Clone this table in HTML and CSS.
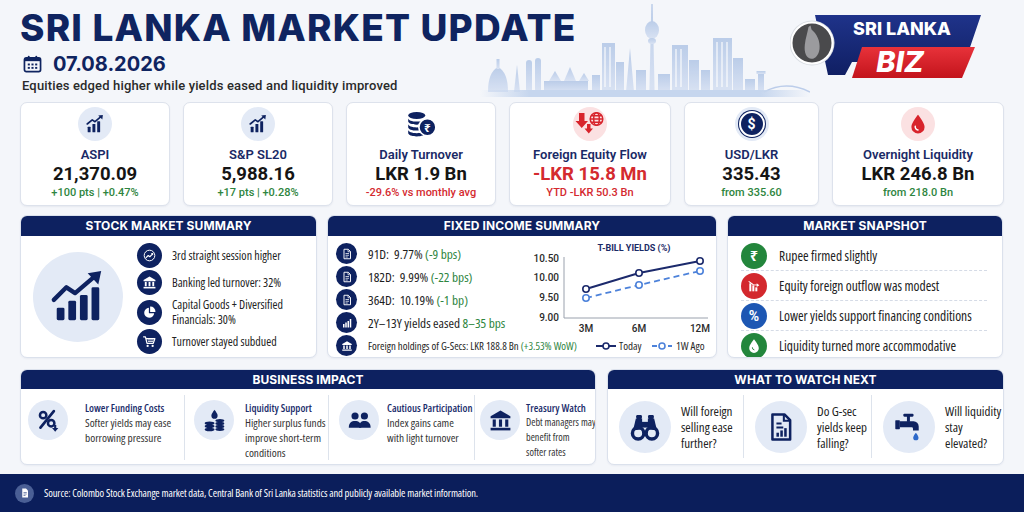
FILE: index.html
```html
<!DOCTYPE html>
<html lang="en">
<head>
<meta charset="utf-8">
<title>Sri Lanka Market Update</title>
<link rel="stylesheet" href="styles.css">
</head>
<body>
<svg class="sprite" aria-hidden="true">
  <defs>
    <symbol id="s-growth" viewBox="0 0 24 24">
      <rect x="4" y="15" width="3.2" height="6" rx=".6"/>
      <rect x="9.2" y="12" width="3.2" height="9" rx=".6"/>
      <rect x="14.4" y="9" width="3.2" height="12" rx=".6"/>
      <path d="M3.5 12 L9 7.5 L12 9.5 L18.5 4" fill="none" stroke="currentColor" stroke-width="1.8" stroke-linecap="round" stroke-linejoin="round"/>
      <path d="M15.5 2.6 L20.6 2.2 L20 7.2 Z"/>
    </symbol>
    <symbol id="s-bigchart" viewBox="0 0 60 60">
      <rect x="8" y="41" width="8" height="13" rx="1.5"/>
      <rect x="20" y="34" width="8" height="20" rx="1.5"/>
      <rect x="32" y="28" width="8" height="26" rx="1.5"/>
      <rect x="44" y="20" width="8" height="34" rx="1.5"/>
      <path d="M5 33 L18 20 L27 26 L47 9" fill="none" stroke="currentColor" stroke-width="4.5" stroke-linecap="round" stroke-linejoin="round"/>
      <path d="M40 5.5 L54 3 L51 17 Z"/>
    </symbol>
    <symbol id="s-trend" viewBox="0 0 24 24">
      <circle cx="12" cy="12" r="8.5" fill="none" stroke="currentColor" stroke-width="1.6"/>
      <path d="M6.5 15.5 L10 12 L12.5 14 L17 9.5" fill="none" stroke="currentColor" stroke-width="1.8" stroke-linecap="round" stroke-linejoin="round"/>
      <path d="M14 8.5 L18 8 L17.6 12 Z"/>
    </symbol>
    <symbol id="s-bank" viewBox="0 0 24 24">
      <path d="M12 2.5 L2.5 8 V9.8 H21.5 V8 Z"/>
      <rect x="4.5" y="11" width="3" height="7"/>
      <rect x="10.5" y="11" width="3" height="7"/>
      <rect x="16.5" y="11" width="3" height="7"/>
      <rect x="2.5" y="19" width="19" height="2.5"/>
    </symbol>
    <symbol id="s-pie" viewBox="0 0 24 24">
      <path d="M11 4.5 A8 8 0 1 0 19.5 13 H11 Z"/>
      <path d="M13 2.5 A8 8 0 0 1 21.5 11 H13 Z"/>
    </symbol>
    <symbol id="s-cart" viewBox="0 0 24 24">
      <path d="M2.5 4.5 H5.5 L8 15 H18 L20.5 7.5 H6.5" fill="none" stroke="currentColor" stroke-width="2" stroke-linejoin="round" stroke-linecap="round"/>
      <path d="M9 9.5 H18.5 M9.5 12 H17.8" stroke="currentColor" stroke-width="1.3"/>
      <circle cx="9" cy="19" r="1.8"/>
      <circle cx="17" cy="19" r="1.8"/>
    </symbol>
    <symbol id="s-doc" viewBox="0 0 24 24">
      <path d="M6 2.5 H14.5 L19 7 V21.5 H6 Z" fill="none" stroke="currentColor" stroke-width="1.9" stroke-linejoin="round"/>
      <path d="M14 3 V7.5 H18.5" fill="none" stroke="currentColor" stroke-width="1.5"/>
      <path d="M9 11 H16 M9 14.5 H16 M9 18 H13.5" stroke="currentColor" stroke-width="1.5"/>
    </symbol>
    <symbol id="s-bars" viewBox="0 0 24 24">
      <rect x="4" y="14" width="3" height="7"/>
      <rect x="8.5" y="11" width="3" height="10"/>
      <rect x="13" y="8" width="3" height="13"/>
      <rect x="17.5" y="4" width="3" height="17"/>
    </symbol>
    <symbol id="s-coins" viewBox="0 0 30 26">
      <ellipse cx="11" cy="5" rx="8" ry="3.2"/>
      <path d="M3 7.5 V10.5 C3 12.3 6.6 13.7 11 13.7 S19 12.3 19 10.5 V7.5 C19 9.3 15.4 10.7 11 10.7 S3 9.3 3 7.5 Z"/>
      <path d="M3 13 V16 C3 17.8 6.6 19.2 11 19.2 S19 17.8 19 16 V13 C19 14.8 15.4 16.2 11 16.2 S3 14.8 3 13 Z"/>
      <path d="M3 18.5 V21.5 C3 23.3 6.6 24.7 11 24.7 S19 23.3 19 21.5 V18.5 C19 20.3 15.4 21.7 11 21.7 S3 20.3 3 18.5 Z"/>
      <circle cx="21" cy="16" r="8" stroke="#fff" stroke-width="1.6"/>
      <text x="21" y="20.2" text-anchor="middle" font-size="11" font-weight="700" fill="#fff" font-family="Noto Sans, DejaVu Sans, sans-serif">₹</text>
    </symbol>
    <symbol id="s-flow" viewBox="0 0 30 26">
      <path d="M4 2 H9.5 V10 H13 L6.75 17 L0.5 10 H4 Z"/>
      <path d="M12 13 H15.5 V17.5 H18 L13.75 22.5 L9.5 17.5 H12 Z"/>
      <g fill="none" stroke="currentColor" stroke-width="1.5">
        <circle cx="21.5" cy="8" r="6.3"/>
        <ellipse cx="21.5" cy="8" rx="2.8" ry="6.3"/>
        <path d="M15.2 8 H27.8 M16.2 4.8 H26.8 M16.2 11.2 H26.8"/>
      </g>
    </symbol>
    <symbol id="s-drop" viewBox="0 0 24 24">
      <path d="M12 2 C12 2 4.8 10.5 4.8 15.2 A7.2 7.2 0 0 0 19.2 15.2 C19.2 10.5 12 2 12 2 Z"/>
    </symbol>
    <symbol id="s-pctdown" viewBox="0 0 28 28">
      <circle cx="8" cy="8" r="3.6" fill="none" stroke="currentColor" stroke-width="2.8"/>
      <circle cx="17" cy="17" r="3.6" fill="none" stroke="currentColor" stroke-width="2.8"/>
      <path d="M20 3.5 L5 22" stroke="currentColor" stroke-width="3" stroke-linecap="round"/>
      <path d="M21.5 19 V24" stroke="currentColor" stroke-width="2.4"/>
      <path d="M18 22.5 L21.5 26.5 L25 22.5 Z"/>
    </symbol>
    <symbol id="s-dropcoins" viewBox="0 0 28 28">
      <path d="M14 2 C14 2 10.5 6.3 10.5 8.6 A3.5 3.5 0 0 0 17.5 8.6 C17.5 6.3 14 2 14 2 Z"/>
      <ellipse cx="8.5" cy="17" rx="5.5" ry="2"/>
      <ellipse cx="8.5" cy="20.5" rx="5.5" ry="2"/>
      <ellipse cx="8.5" cy="24" rx="5.5" ry="2"/>
      <ellipse cx="20" cy="14" rx="5" ry="1.8"/>
      <ellipse cx="20" cy="17.3" rx="5" ry="1.8"/>
      <ellipse cx="20" cy="20.6" rx="5" ry="1.8"/>
      <ellipse cx="20" cy="23.9" rx="5" ry="1.8"/>
    </symbol>
    <symbol id="s-people" viewBox="0 0 28 28">
      <circle cx="9" cy="9" r="4"/>
      <circle cx="19.5" cy="9" r="4"/>
      <path d="M2 22 C2 16.5 5 14.5 9 14.5 S16 16.5 16 22 Z"/>
      <path d="M13.5 22 C13.5 16.5 16 14.5 19.5 14.5 S26.5 16.5 26.5 22 Z"/>
    </symbol>
    <symbol id="s-binoc" viewBox="0 0 28 28">
      <path d="M3.5 17 L6 6.5 H11.5 V16 Z"/>
      <path d="M24.5 17 L22 6.5 H16.5 V16 Z"/>
      <rect x="6.3" y="3.5" width="5" height="3.5" rx="1"/>
      <rect x="16.7" y="3.5" width="5" height="3.5" rx="1"/>
      <rect x="11" y="9.5" width="6" height="5"/>
      <circle cx="8" cy="19.5" r="5" fill="none" stroke="currentColor" stroke-width="3"/>
      <circle cx="20" cy="19.5" r="5" fill="none" stroke="currentColor" stroke-width="3"/>
    </symbol>
    <symbol id="s-report" viewBox="0 0 28 28">
      <path d="M6.5 3 H17 L22 8 V25 H6.5 Z" fill="none" stroke="currentColor" stroke-width="2.2" stroke-linejoin="round"/>
      <path d="M16.5 3.5 V8.5 H21.5" fill="none" stroke="currentColor" stroke-width="1.8"/>
      <path d="M10 11 H14.5 M10 14.5 H16" stroke="currentColor" stroke-width="1.8"/>
      <rect x="10" y="19" width="2.2" height="3.5"/>
      <rect x="13.4" y="17" width="2.2" height="5.5"/>
      <rect x="16.8" y="15" width="2.2" height="7.5"/>
    </symbol>
    <symbol id="s-tap" viewBox="0 0 28 28">
      <rect x="2" y="8" width="4" height="8" rx=".6"/>
      <path d="M6 9 H18 A4.5 4.5 0 0 1 22.5 13.5 V17 H17.5 V15.5 A1.2 1.2 0 0 0 16.3 14.3 H6 Z"/>
      <rect x="12.2" y="4" width="2.6" height="5.5"/>
      <rect x="9" y="2.5" width="9" height="2.5" rx="1"/>
      <path d="M20 19 C20 19 17.7 21.8 17.7 23.3 A2.3 2.3 0 0 0 22.3 23.3 C22.3 21.8 20 19 20 19 Z" fill="#2c68c9"/>
    </symbol>
  </defs>
</svg>

<div class="page">
  <header class="header">
    <svg class="skyline" viewBox="0 0 330 98" aria-hidden="true">
      <defs>
        <linearGradient id="skyg" x1="0" y1="0" x2="0" y2="1">
          <stop offset="0" stop-color="#adc3e5"/>
          <stop offset="1" stop-color="#d3def2"/>
        </linearGradient>
        <linearGradient id="groundg" x1="0" y1="0" x2="1" y2="0">
          <stop offset="0" stop-color="#c6d6ee" stop-opacity="0"/>
          <stop offset=".15" stop-color="#c6d6ee"/>
          <stop offset=".85" stop-color="#c6d6ee"/>
          <stop offset="1" stop-color="#c6d6ee" stop-opacity="0"/>
        </linearGradient>
      </defs>
      <g fill="url(#skyg)" opacity=".8">
        <path d="M8 92 Q8 72 18 67 Q28 72 28 92 Z"/>
        <rect x="16.5" y="59" width="3" height="10"/>
        <polygon points="34,92 37,65 40,92"/>
        <rect x="46" y="60" width="6" height="32" rx="3"/>
        <rect x="55" y="58" width="6" height="34" rx="3"/>
        <rect x="64" y="81" width="44" height="11"/>
        <polygon points="69,81 75,71 81,81"/>
        <polygon points="84,81 90,67 96,81"/>
        <polygon points="99,81 104,73 109,81"/>
        <rect x="112" y="75" width="8" height="17"/>
        <rect x="122" y="43" width="13" height="49"/>
        <rect x="136" y="62" width="8" height="30"/>
        <polygon points="146,92 150,48 154,92"/>
        <rect x="156" y="70" width="10" height="22"/>
        <polygon points="171.3,4 172.7,4 174.6,92 169.4,92"/>
        <ellipse cx="172" cy="30" rx="7" ry="9"/>
        <ellipse cx="172" cy="41" rx="4" ry="3"/>
        <rect x="178" y="74" width="12" height="18"/>
        <rect x="192" y="45" width="16" height="47"/>
        <rect x="209" y="60" width="10" height="32"/>
        <rect x="221" y="70" width="9" height="22"/>
        <rect x="233" y="38" width="19" height="54"/>
        <rect x="253" y="58" width="10" height="34"/>
        <rect x="265" y="79" width="10" height="13"/>
        <rect x="278" y="74" width="6" height="18"/>
        <rect x="276.5" y="71" width="9" height="3"/>
      </g>
      <g fill="#ffffff" opacity=".55">
        <rect x="124" y="47" width="2" height="40"/><rect x="129" y="47" width="2" height="40"/>
        <rect x="195" y="49" width="2" height="38"/><rect x="200" y="49" width="2" height="38"/>
        <rect x="236" y="42" width="2" height="45"/><rect x="241" y="42" width="2" height="45"/><rect x="246" y="42" width="2" height="45"/>
      </g>
      <path d="M284 92 Q306 80 330 92" fill="none" stroke="#bccdea" stroke-width="1.5"/>
      <rect x="0" y="90" width="330" height="7" fill="url(#groundg)"/>
    </svg>

    <div class="head-left">
      <h1 class="title">SRI LANKA MARKET UPDATE</h1>
      <div class="date-row">
        <svg class="cal" viewBox="0 0 20 19" aria-hidden="true">
          <rect x="1.5" y="3" width="17" height="14.5" rx="2" fill="none" stroke="currentColor" stroke-width="1.8"/>
          <rect x="1.5" y="3" width="17" height="3.5" fill="currentColor"/>
          <rect x="5" y="0.8" width="2" height="4" rx="1" fill="currentColor"/>
          <rect x="13" y="0.8" width="2" height="4" rx="1" fill="currentColor"/>
          <g fill="currentColor">
            <rect x="5" y="9" width="2.2" height="2"/><rect x="8.9" y="9" width="2.2" height="2"/><rect x="12.8" y="9" width="2.2" height="2"/>
            <rect x="5" y="12.6" width="2.2" height="2"/><rect x="8.9" y="12.6" width="2.2" height="2"/><rect x="12.8" y="12.6" width="2.2" height="2"/>
          </g>
        </svg>
        <span class="date">07.08.2026</span>
      </div>
      <p class="subtitle">Equities edged higher while yields eased and liquidity improved</p>
    </div>

    <svg class="logo" viewBox="0 0 212 70" aria-label="Sri Lanka Biz">
      <defs>
        <linearGradient id="redg" x1="0" y1="0" x2="0" y2="1">
          <stop offset="0" stop-color="#e8323a"/>
          <stop offset="1" stop-color="#c3141c"/>
        </linearGradient>
        <linearGradient id="navyg" x1="0" y1="0" x2="0" y2="1">
          <stop offset="0" stop-color="#1f338a"/>
          <stop offset="1" stop-color="#101f63"/>
        </linearGradient>
      </defs>
      <polygon points="25,3 191,3 175,50 62,50 55,63 38,63" fill="url(#navyg)"/>
      <polygon points="72,35 185,35 172,66 62,66" fill="url(#redg)"/>
      <text x="112" y="22.5" text-anchor="middle" class="logo-top">SRI LANKA</text>
      <text x="110" y="60" text-anchor="middle" class="logo-biz">BIZ</text>
      <circle cx="22" cy="31" r="22.5" fill="#d9dde3"/>
      <circle cx="22" cy="31" r="20.5" fill="#4a4a4c" stroke="#fff" stroke-width="2"/>
      <path d="M18.5 15 L20.5 13.5 L21.5 17.5 C26.5 21.5 30.5 29 29.5 37 C28.8 43 25 47.5 21 46.8 C16 46 14 40 14.8 33 C15.5 26 17.5 21 18.5 15 Z" fill="#9b9b9e"/>
    </svg>
  </header>

  <section class="kpis">
    <div class="kpi">
      <span class="kpi-icon"><svg class="navy" viewBox="0 0 24 24" fill="currentColor"><use href="#s-growth"/></svg></span>
      <span class="kpi-label">ASPI</span>
      <span class="kpi-value">21,370.09</span>
      <span class="kpi-sub up">+100 pts | +0.47%</span>
    </div>
    <div class="kpi">
      <span class="kpi-icon"><svg class="navy" viewBox="0 0 24 24" fill="currentColor"><use href="#s-growth"/></svg></span>
      <span class="kpi-label">S&amp;P SL20</span>
      <span class="kpi-value">5,988.16</span>
      <span class="kpi-sub up">+17 pts | +0.28%</span>
    </div>
    <div class="kpi">
      <span class="kpi-icon plain"><svg class="navy coins" viewBox="0 0 30 26" fill="currentColor"><use href="#s-coins"/></svg></span>
      <span class="kpi-label">Daily Turnover</span>
      <span class="kpi-value">LKR 1.9 Bn</span>
      <span class="kpi-sub down">-29.6% vs monthly avg</span>
    </div>
    <div class="kpi">
      <span class="kpi-icon pink"><svg class="red flow" viewBox="0 0 30 26" fill="currentColor"><use href="#s-flow"/></svg></span>
      <span class="kpi-label">Foreign Equity Flow</span>
      <span class="kpi-value down">-LKR 15.8 Mn</span>
      <span class="kpi-sub down">YTD -LKR 50.3 Bn</span>
    </div>
    <div class="kpi">
      <span class="kpi-icon"><span class="usd">$</span></span>
      <span class="kpi-label">USD/LKR</span>
      <span class="kpi-value">335.43</span>
      <span class="kpi-sub up">from 335.60</span>
    </div>
    <div class="kpi">
      <span class="kpi-icon pink"><svg class="red" viewBox="0 0 24 24" fill="currentColor"><use href="#s-drop"/><path d="M9 14.5 A3.5 3.5 0 0 0 12 18.5" fill="none" stroke="#fff" stroke-width="1.6" stroke-linecap="round"/></svg></span>
      <span class="kpi-label">Overnight Liquidity</span>
      <span class="kpi-value">LKR 246.8 Bn</span>
      <span class="kpi-sub up">from 218.0 Bn</span>
    </div>
  </section>

  <section class="row2">
    <div class="panel">
      <div class="panel-head">STOCK MARKET SUMMARY</div>
      <div class="ss-body">
        <div class="ss-big"><svg viewBox="0 0 60 60" fill="currentColor"><use href="#s-bigchart"/></svg></div>
        <ul class="ss-list">
          <li><span class="ic"><svg viewBox="0 0 24 24" fill="currentColor"><use href="#s-trend"/></svg></span>3rd straight session higher</li>
          <li><span class="ic"><svg viewBox="0 0 24 24" fill="currentColor"><use href="#s-bank"/></svg></span>Banking led turnover: 32%</li>
          <li><span class="ic"><svg viewBox="0 0 24 24" fill="currentColor"><use href="#s-pie"/></svg></span><span>Capital Goods + Diversified<br>Financials: 30%</span></li>
          <li><span class="ic"><svg viewBox="0 0 24 24" fill="currentColor"><use href="#s-cart"/></svg></span>Turnover stayed subdued</li>
        </ul>
      </div>
    </div>

    <div class="panel">
      <div class="panel-head">FIXED INCOME SUMMARY</div>
      <div class="fi-body">
        <ul class="fi-list">
          <li><span class="ic sm"><svg viewBox="0 0 24 24" fill="currentColor"><use href="#s-doc"/></svg></span><span>91D:&nbsp; 9.77% <span class="g">(-9 bps)</span></span></li>
          <li><span class="ic sm"><svg viewBox="0 0 24 24" fill="currentColor"><use href="#s-doc"/></svg></span><span>182D:&nbsp; 9.99% <span class="g">(-22 bps)</span></span></li>
          <li><span class="ic sm"><svg viewBox="0 0 24 24" fill="currentColor"><use href="#s-doc"/></svg></span><span>364D:&nbsp; 10.19% <span class="g">(-1 bp)</span></span></li>
          <li><span class="ic sm"><svg viewBox="0 0 24 24" fill="currentColor"><use href="#s-bars"/></svg></span><span>2Y–13Y yields eased <span class="g">8–35 bps</span></span></li>
          <li class="small"><span class="ic sm"><svg viewBox="0 0 24 24" fill="currentColor"><use href="#s-bank"/></svg></span><span>Foreign holdings of G-Secs: LKR 188.8 Bn <span class="g">(+3.53% WoW)</span></span></li>
        </ul>
        <svg class="chart" viewBox="0 0 188 121">
          <text x="102" y="15" text-anchor="middle" class="c-title">T-BILL YIELDS (%)</text>
          <g class="c-ylab" text-anchor="end">
            <text x="27" y="26">10.50</text>
            <text x="27" y="45">10.00</text>
            <text x="27" y="65">9.50</text>
            <text x="27" y="85">9.00</text>
          </g>
          <path d="M32 21 V82 H176" fill="none" stroke="#9aa1ad" stroke-width="1"/>
          <polyline points="54,62 107,49 168,35" fill="none" stroke="#4d82da" stroke-width="1.8" stroke-dasharray="6 4"/>
          <polyline points="54,53 107,37 168,25" fill="none" stroke="#1c2a6c" stroke-width="2"/>
          <g fill="#fff" stroke-width="1.6">
            <circle cx="54" cy="62" r="3.2" stroke="#4d82da"/>
            <circle cx="107" cy="49" r="3.2" stroke="#4d82da"/>
            <circle cx="168" cy="35" r="3.2" stroke="#4d82da"/>
            <circle cx="54" cy="53" r="3.2" stroke="#1c2a6c"/>
            <circle cx="107" cy="37" r="3.2" stroke="#1c2a6c"/>
            <circle cx="168" cy="25" r="3.2" stroke="#1c2a6c"/>
          </g>
          <g class="c-xlab" text-anchor="middle">
            <text x="54" y="96">3M</text>
            <text x="107" y="96">6M</text>
            <text x="168" y="96">12M</text>
          </g>
          <path d="M64 110 H84" stroke="#1c2a6c" stroke-width="2"/>
          <circle cx="74" cy="110" r="3" fill="#fff" stroke="#1c2a6c" stroke-width="1.6"/>
          <text x="87" y="114" class="c-leg">Today</text>
          <path d="M120 110 H140" stroke="#4d82da" stroke-width="1.8" stroke-dasharray="5 3"/>
          <circle cx="130" cy="110" r="3" fill="#fff" stroke="#4d82da" stroke-width="1.6"/>
          <text x="144" y="114" class="c-leg">1W Ago</text>
        </svg>
      </div>
    </div>

    <div class="panel">
      <div class="panel-head">MARKET SNAPSHOT</div>
      <ul class="ms-list">
        <li><span class="ms-ic green"><span class="rs">₹</span></span>Rupee firmed slightly</li>
        <li><span class="ms-ic redc"><svg viewBox="0 0 24 24"><g fill="#fff"><rect x="5" y="8" width="3" height="12"/><rect x="9.5" y="11" width="3" height="9"/><rect x="14" y="14" width="3" height="6"/></g><path d="M4 5 L11 10 L17 10.5" fill="none" stroke="#fff" stroke-width="1.6"/><path d="M16 8 L20 11 L16 13.5 Z" fill="#fff"/></svg></span>Equity foreign outflow was modest</li>
        <li><span class="ms-ic blue"><span class="pc">%</span></span>Lower yields support financing conditions</li>
        <li><span class="ms-ic green"><svg viewBox="0 0 24 24" fill="#fff"><use href="#s-drop"/><path d="M9.5 14.5 A3 3 0 0 0 12 17.8" fill="none" stroke="#23863c" stroke-width="1.4" stroke-linecap="round"/></svg></span>Liquidity turned more accommodative</li>
      </ul>
    </div>
  </section>

  <section class="row3">
    <div class="panel">
      <div class="panel-head h19">BUSINESS IMPACT</div>
      <div class="bi-body">
        <div class="bi-item">
          <span class="circ bi-c"><svg viewBox="0 0 28 28" fill="currentColor"><use href="#s-pctdown"/></svg></span>
          <div class="bi-text"><div class="bi-title">Lower Funding Costs</div><div class="bi-desc">Softer yields may ease<br>borrowing pressure</div></div>
        </div>
        <div class="bi-item">
          <span class="circ bi-c"><svg viewBox="0 0 28 28" fill="currentColor"><use href="#s-dropcoins"/></svg></span>
          <div class="bi-text"><div class="bi-title">Liquidity Support</div><div class="bi-desc">Higher surplus funds<br>improve short-term<br>conditions</div></div>
        </div>
        <div class="bi-item">
          <span class="circ bi-c"><svg viewBox="0 0 28 28" fill="currentColor"><use href="#s-people"/></svg></span>
          <div class="bi-text"><div class="bi-title">Cautious Participation</div><div class="bi-desc">Index gains came<br>with light turnover</div></div>
        </div>
        <div class="bi-item">
          <span class="circ bi-c"><svg viewBox="0 0 24 24" fill="currentColor"><use href="#s-bank"/></svg></span>
          <div class="bi-text"><div class="bi-title">Treasury Watch</div><div class="bi-desc sm">Debt managers may<br>benefit from<br>softer rates</div></div>
        </div>
      </div>
    </div>

    <div class="panel">
      <div class="panel-head h19">WHAT TO WATCH NEXT</div>
      <div class="ww-body">
        <div class="ww-item">
          <span class="circ ww-c"><svg viewBox="0 0 28 28" fill="currentColor"><use href="#s-binoc"/></svg></span>
          <div class="ww-text">Will foreign<br>selling ease<br>further?</div>
        </div>
        <div class="ww-item">
          <span class="circ ww-c"><svg viewBox="0 0 28 28" fill="currentColor"><use href="#s-report"/></svg></span>
          <div class="ww-text">Do G-sec<br>yields keep<br>falling?</div>
        </div>
        <div class="ww-item">
          <span class="circ ww-c"><svg viewBox="0 0 28 28" fill="currentColor"><use href="#s-tap"/></svg></span>
          <div class="ww-text">Will liquidity<br>stay<br>elevated?</div>
        </div>
      </div>
    </div>
  </section>
</div>

<footer class="footer">
  <span class="f-ic"><svg viewBox="0 0 24 24" fill="#fff"><path d="M6.5 3 H14 L18 7 V21 H6.5 Z"/><path d="M9 11 H15.5 M9 14 H15.5 M9 17 H13" stroke="#4a5f95" stroke-width="1.4"/></svg></span>
  <span class="f-text">Source: Colombo Stock Exchange market data, Central Bank of Sri Lanka statistics and publicly available market information.</span>
</footer>
</body>
</html>
```

FILE: styles.css
```css
* { box-sizing: border-box; }

html, body {
  margin: 0;
  padding: 0;
}

body {
  width: 1024px;
  height: 512px;
  overflow: hidden;
  background: #f4f6fa;
  font-family: Inter, Roboto, "Liberation Sans", sans-serif;
  color: #1b1b1b;
}

.sprite {
  position: absolute;
  width: 0;
  height: 0;
  overflow: hidden;
}

.page {
  padding: 0 20px;
}

/* ---------- header ---------- */
.header {
  position: relative;
  height: 98px;
  display: flex;
  justify-content: space-between;
  align-items: flex-start;
}

.skyline {
  position: absolute;
  left: 460px;
  top: 0;
  width: 330px;
  height: 98px;
}

.head-left {
  position: relative;
  padding-top: 10px;
}

.title {
  margin: 0;
  font: 800 37px/36px Inter, sans-serif;
  letter-spacing: 1.2px;
  color: #0f2460;
}

.date-row {
  display: flex;
  align-items: center;
  gap: 11px;
  margin: 7px 0 0 3px;
  height: 22px;
}

.cal {
  width: 19px;
  height: 18px;
  color: #0f2460;
}

.date {
  font: 700 20px/22px Inter, sans-serif;
  color: #0f2460;
}

.subtitle {
  margin: 3px 0 0 2px;
  font: 500 13px/16px Roboto, sans-serif;
  letter-spacing: 0.15px;
  color: #2a2a2a;
}

.logo {
  position: relative;
  width: 212px;
  height: 70px;
  margin-top: 12px;
  margin-right: 2px;
}

.logo-top {
  font: 800 18px Inter, sans-serif;
  fill: #fff;
}

.logo-biz {
  font: italic 800 29px Inter, sans-serif;
  fill: #fff;
}

/* ---------- KPI cards ---------- */
.kpis {
  display: grid;
  grid-template-columns: 150px 150px 150px 162px 135px 172px;
  column-gap: 13px;
  margin-top: 4px;
}

.kpi {
  height: 104px;
  background: #fff;
  border: 1px solid #dde2ec;
  border-radius: 7px;
  box-shadow: 0 1px 2px rgba(20, 40, 90, 0.06);
  display: flex;
  flex-direction: column;
  align-items: center;
  padding-top: 4px;
}

.kpi-icon {
  width: 34px;
  height: 34px;
  border-radius: 50%;
  background: #e3eaf6;
  display: flex;
  align-items: center;
  justify-content: center;
}

.kpi-icon svg { width: 22px; height: 22px; }
.kpi-icon.plain { background: transparent; }
.kpi-icon.pink { background: #fbe1e2; }
.kpi-icon .coins { width: 32px; height: 28px; }
.kpi-icon .flow { width: 30px; height: 26px; }

.navy { color: #0e2260; }
.red { color: #d8242c; }

.usd {
  width: 26px;
  height: 26px;
  border-radius: 50%;
  background: #0e2260;
  border: 2px solid #fff;
  box-shadow: 0 0 0 1px #0e2260;
  color: #fff;
  font: 700 14px/22px Roboto, sans-serif;
  text-align: center;
}

.kpi-label {
  margin-top: 6px;
  font: 600 13px/16px Roboto, sans-serif;
  color: #1a2a66;
}

.kpi-value {
  font: 700 18.5px/22px Roboto, sans-serif;
  color: #151515;
}

.kpi-sub {
  margin-top: 1px;
  font: 500 11px/14px Roboto, sans-serif;
}

.up { color: #2e8540; }
.down { color: #d42a2f; }
.kpi-value.down { color: #d42a2f; }

/* ---------- panels ---------- */
.row2 {
  display: grid;
  grid-template-columns: 297px 390px 276px;
  column-gap: 10px;
  margin-top: 9px;
  height: 143px;
}

.row3 {
  display: grid;
  grid-template-columns: 576px 397px;
  column-gap: 11px;
  margin-top: 11px;
  height: 96px;
}

.panel {
  background: #fff;
  border: 1px solid #dbe1ec;
  border-radius: 7px;
  overflow: hidden;
  display: flex;
  flex-direction: column;
  box-shadow: 0 1px 2px rgba(20, 40, 90, 0.05);
}

.panel-head {
  flex: none;
  height: 20px;
  background: #0d2160;
  color: #fff;
  font: 700 12px/20px Inter, sans-serif;
  letter-spacing: 0.1px;
  text-align: center;
}

.panel-head.h19 {
  height: 19px;
  line-height: 19px;
}

/* condensed text */
.ss-list li,
.fi-list li,
.ms-list li,
.bi-text,
.ww-text,
.f-text,
.c-leg {
  font-family: "Open Sans", Roboto, sans-serif;
  font-stretch: 75%;
}

.ic {
  flex: none;
  width: 25px;
  height: 25px;
  border-radius: 50%;
  background: #0e2260;
  color: #fff;
  display: flex;
  align-items: center;
  justify-content: center;
}

.ic svg { width: 15px; height: 15px; }
.ic.sm { width: 21px; height: 21px; }
.ic.sm svg { width: 12px; height: 12px; }

/* stock summary */
.ss-body {
  flex: 1;
  display: flex;
  align-items: flex-start;
}

.ss-big {
  flex: none;
  width: 90px;
  height: 90px;
  border-radius: 50%;
  background: #e3eaf6;
  margin: 16px 0 0 12px;
  display: flex;
  align-items: center;
  justify-content: center;
  color: #0e2260;
}

.ss-big svg { width: 58px; height: 58px; }

.ss-list {
  list-style: none;
  margin: 7px 0 0 14px;
  padding: 0;
  display: flex;
  flex-direction: column;
  gap: 2px;
}

.ss-list li {
  display: flex;
  align-items: center;
  gap: 10px;
  min-height: 25px;
  font-size: 12px;
  line-height: 15px;
  color: #222;
  white-space: nowrap;
}

/* fixed income */
.fi-body {
  flex: 1;
  display: flex;
}

.fi-list {
  flex: none;
  width: 196px;
  list-style: none;
  margin: 6px 0 0 8px;
  padding: 0;
}

.fi-list li {
  height: 23px;
  display: flex;
  align-items: center;
  gap: 11px;
  font-size: 13.3px;
  color: #1d1d1d;
  white-space: nowrap;
}

.fi-list li.small { font-size: 10.8px; }

.g { color: #2e8540; }

.chart {
  flex: none;
  margin-left: auto;
  width: 188px;
  height: 121px;
}

.c-title {
  font: 700 9px Roboto, sans-serif;
  fill: #1a2a66;
}

.c-ylab text,
.c-xlab text {
  font: 500 10px Roboto, sans-serif;
  fill: #2a2a2a;
}

.c-leg {
  font-size: 11px;
  fill: #2a2a2a;
}

/* market snapshot */
.ms-list {
  list-style: none;
  margin: 5px 15px 0 13px;
  padding: 0;
}

.ms-list li {
  height: 30px;
  display: flex;
  align-items: center;
  gap: 12px;
  border-bottom: 1px dashed #d5dbe6;
  font-size: 13.5px;
  color: #222;
  white-space: nowrap;
}

.ms-list li:last-child { border-bottom: none; }

.ms-ic {
  flex: none;
  width: 26px;
  height: 26px;
  border-radius: 50%;
  display: flex;
  align-items: center;
  justify-content: center;
  color: #fff;
}

.ms-ic svg { width: 16px; height: 16px; }
.ms-ic.green { background: #23863c; }
.ms-ic.redc { background: #d3282d; }
.ms-ic.blue { background: #1d57b3; }

.rs {
  font: 700 14px/1 "Noto Sans", "DejaVu Sans", sans-serif;
}

.pc {
  font: 700 14px/1 Roboto, sans-serif;
}

/* business impact */
.circ {
  flex: none;
  border-radius: 50%;
  background: #e3eaf6;
  display: flex;
  align-items: center;
  justify-content: center;
  color: #0e2260;
}

.bi-body {
  flex: 1;
  display: grid;
  grid-template-columns: 163px 144px 146px 1fr;
  padding: 6px 0;
}

.bi-item {
  display: flex;
  align-items: flex-start;
  padding-left: 9px;
  gap: 11px;
}

.bi-item + .bi-item { border-left: 1px solid #dde3ec; }
.bi-item:nth-child(1) { padding-left: 7px; gap: 17px; }
.bi-item:nth-child(3) { padding-left: 10px; gap: 8px; }
.bi-item:nth-child(4) { padding-left: 5px; gap: 6px; }

.bi-c {
  width: 40px;
  height: 40px;
  margin-top: 5px;
}

.bi-c svg { width: 25px; height: 25px; }

.bi-text {
  padding-top: 6px;
  white-space: nowrap;
}

.bi-title {
  font-size: 10.6px;
  line-height: 14px;
  font-weight: 600;
  color: #1b2d6b;
}

.bi-desc {
  font-size: 11.3px;
  line-height: 15px;
  color: #333;
}

.bi-desc.sm {
  font-size: 10.2px;
}

/* what to watch */
.ww-body {
  flex: 1;
  display: grid;
  grid-template-columns: 135px 128px 1fr;
  padding: 6px 0;
}

.ww-item {
  display: flex;
  align-items: center;
  padding-left: 11px;
  gap: 10px;
}

.ww-item + .ww-item { border-left: 1px solid #dde3ec; }

.ww-c {
  width: 52px;
  height: 52px;
}

.ww-c svg { width: 32px; height: 32px; }

.ww-text {
  font-size: 13px;
  line-height: 16px;
  color: #222;
  white-space: nowrap;
}

/* footer */
.footer {
  margin-top: 9px;
  height: 38px;
  background: #0b1e5b;
  display: flex;
  align-items: center;
  padding-left: 15px;
  gap: 10px;
}

.f-ic {
  width: 19px;
  height: 19px;
  border-radius: 50%;
  background: #4a5f95;
  display: flex;
  align-items: center;
  justify-content: center;
}

.f-ic svg { width: 12px; height: 12px; }

.f-text {
  color: #fff;
  font-size: 10.5px;
  letter-spacing: -0.1px;
}
```
